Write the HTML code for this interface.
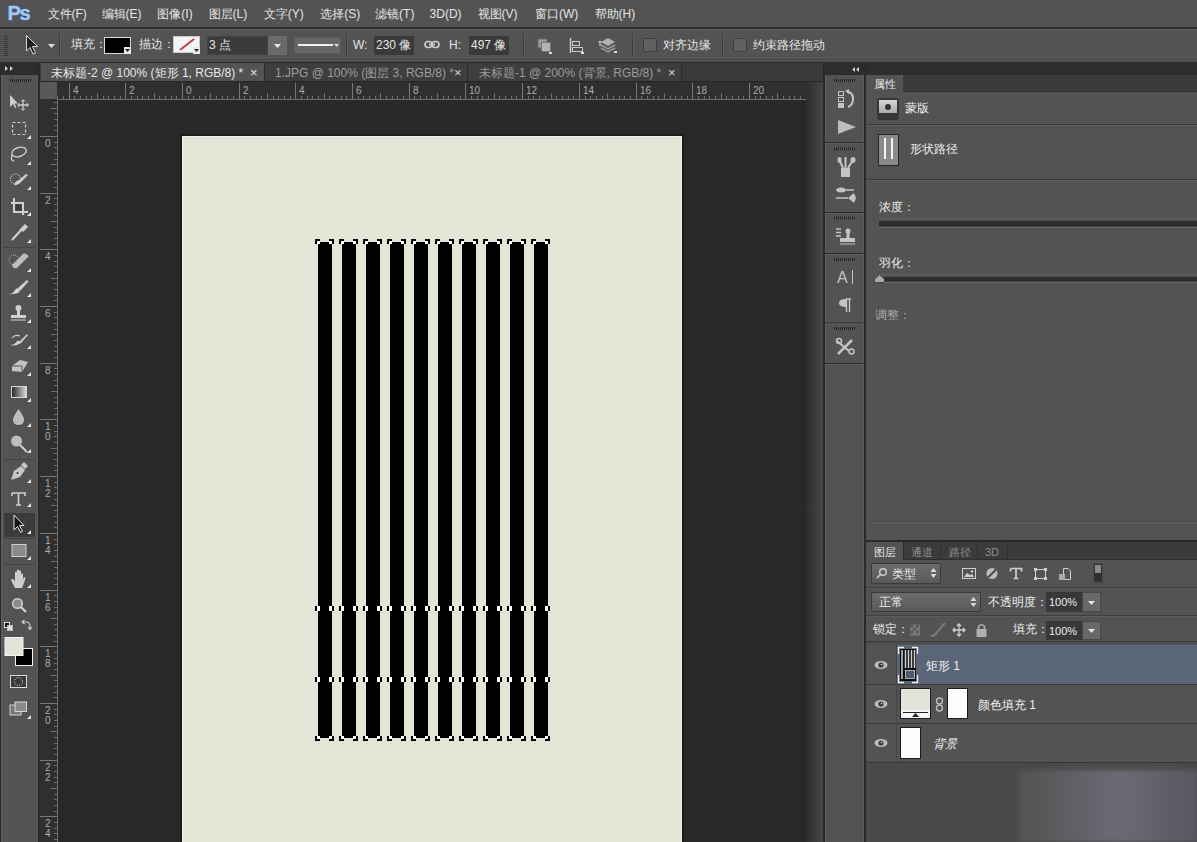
<!DOCTYPE html>
<html><head><meta charset="utf-8">
<style>
*{margin:0;padding:0;box-sizing:border-box}
html,body{width:1197px;height:842px;overflow:hidden}
body{position:relative;background:#535353;font-family:"Liberation Sans",sans-serif;color:#e4e4e4;font-size:12px}
.a{position:absolute}
.t{position:absolute;white-space:nowrap;line-height:1}
svg{position:absolute;overflow:visible}
</style></head><body>

<!-- MENU BAR -->
<div class="a" style="left:0;top:0;width:1197px;height:28px;background:#535353"></div>
<div class="a" style="left:0;top:27px;width:1197px;height:2px;background:#2c2c2c"></div>
<svg style="left:0;top:0" width="40" height="28"><g font-family="Liberation Sans" font-weight="700"><g fill="none" stroke="#2f507a" stroke-width="2.2"><text x="7.5" y="20" font-size="20">P</text><text x="19.5" y="20" font-size="20">s</text></g><g fill="#a9c6e8" stroke="#a9c6e8" stroke-width="0.5"><text x="7.5" y="20" font-size="20">P</text><text x="19.5" y="20" font-size="20">s</text></g></g></svg>
<div class="t" style="left:47.5px;top:8px">文件(F)</div><div class="t" style="left:101.6px;top:8px">编辑(E)</div><div class="t" style="left:157.3px;top:8px">图像(I)</div><div class="t" style="left:208.5px;top:8px">图层(L)</div><div class="t" style="left:263.8px;top:8px">文字(Y)</div><div class="t" style="left:320.2px;top:8px">选择(S)</div><div class="t" style="left:375.1px;top:8px">滤镜(T)</div><div class="t" style="left:429.6px;top:8px">3D(D)</div><div class="t" style="left:477.6px;top:8px">视图(V)</div><div class="t" style="left:535px;top:8px">窗口(W)</div><div class="t" style="left:594.6px;top:8px">帮助(H)</div>

<!-- OPTIONS BAR -->
<div class="a" style="left:0;top:29px;width:1197px;height:32px;background:#535353;border-top:1px solid #5f5f5f"></div>
<div class="a" style="left:0;top:57px;width:1197px;height:5px;background:#4f4f4f;border-top:1px solid #5a5a5a"></div>
<div class="a" style="left:0;top:62px;width:1197px;height:1px;background:#2a2a2a"></div>


<!-- options content -->
<div class="a" style="left:4px;top:35px;width:4px;height:21px;background:repeating-linear-gradient(180deg,#3a3a3a 0 1px,transparent 1px 2px)"></div>
<svg style="left:25px;top:34px" width="14" height="22" viewBox="0 0 14 22"><path d="M1.5 1.5 L1.5 17 L5 13.5 L8 20 L10.5 19 L7.5 12.5 L12.5 12.5 Z" fill="#1e1e1e" stroke="#d8d8d8" stroke-width="1"/></svg>
<svg style="left:48px;top:44px" width="7" height="4"><path d="M0 0 L7 0 L3.5 4 Z" fill="#e0e0e0"/></svg>
<div class="a" style="left:59px;top:34px;width:1px;height:23px;background:#3c3c3c"></div>
<div class="a" style="left:60px;top:34px;width:1px;height:23px;background:#5e5e5e"></div>
<div class="t" style="left:71px;top:38px">填充：</div>
<div class="a" style="left:104px;top:37px;width:27px;height:17px;background:#000;border:1px solid #dcdcdc"></div>
<div class="a" style="left:124px;top:47px;width:7px;height:7px;background:#e8e8e8"></div>
<svg style="left:125px;top:49px" width="5" height="3"><path d="M0 0 L5 0 L2.5 3 Z" fill="#222"/></svg>
<div class="t" style="left:139px;top:38px">描边：</div>
<div class="a" style="left:173px;top:36px;width:27px;height:17px;background:#f4f4f4;border:1px solid #c8c8c8"></div>
<svg style="left:173px;top:36px" width="27" height="17"><path d="M7 14 L21 3" stroke="#c0404a" stroke-width="2"/></svg>
<div class="a" style="left:193px;top:47px;width:7px;height:7px;background:#e8e8e8"></div>
<svg style="left:194px;top:49px" width="5" height="3"><path d="M0 0 L5 0 L2.5 3 Z" fill="#222"/></svg>
<div class="a" style="left:207px;top:36px;width:61px;height:19px;background:#3b3b3b;border:1px solid #444"></div>
<div class="t" style="left:209px;top:39px">3 点</div>
<div class="a" style="left:268px;top:36px;width:19px;height:19px;background:#6a6a6a"></div>
<svg style="left:274px;top:44px" width="7" height="4"><path d="M0 0 L7 0 L3.5 4 Z" fill="#e6e6e6"/></svg>
<div class="a" style="left:294px;top:37px;width:47px;height:17px;background:#676767;border-radius:2px;border:1px solid #5a5a5a"></div>
<div class="a" style="left:298px;top:44px;width:35px;height:2px;background:#f0f0f0"></div>
<svg style="left:334px;top:44px" width="5" height="3"><path d="M0 0 L5 0 L2.5 3 Z" fill="#e6e6e6"/></svg>
<div class="a" style="left:346px;top:34px;width:1px;height:23px;background:#3c3c3c"></div>
<div class="a" style="left:347px;top:34px;width:1px;height:23px;background:#5e5e5e"></div>
<div class="t" style="left:353px;top:39px">W:</div>
<div class="a" style="left:374px;top:36px;width:40px;height:19px;background:#3a3a3a"></div>
<div class="t" style="left:376px;top:39px">230 像</div>
<svg style="left:424px;top:40px" width="16" height="9" viewBox="0 0 16 9"><rect x="1" y="1.5" width="7" height="6" rx="3" fill="none" stroke="#cfcfcf" stroke-width="1.6"/><rect x="8" y="1.5" width="7" height="6" rx="3" fill="none" stroke="#cfcfcf" stroke-width="1.6"/><path d="M5 4.5 H11" stroke="#cfcfcf" stroke-width="1.6"/></svg>
<div class="t" style="left:449px;top:39px">H:</div>
<div class="a" style="left:469px;top:36px;width:40px;height:19px;background:#3a3a3a"></div>
<div class="t" style="left:471px;top:39px">497 像</div>
<div class="a" style="left:523px;top:34px;width:1px;height:23px;background:#3c3c3c"></div>
<div class="a" style="left:524px;top:34px;width:1px;height:23px;background:#5e5e5e"></div>
<svg style="left:537px;top:38px" width="16" height="16" viewBox="0 0 16 16"><rect x="1" y="1" width="9" height="9" fill="#9a9a9a" stroke="#6a6a6a"/><rect x="4.5" y="4.5" width="9" height="9" fill="#b4b4b4" stroke="#707070"/><rect x="12" y="14" width="3" height="2" fill="#ddd"/></svg>
<svg style="left:569px;top:38px" width="16" height="16" viewBox="0 0 16 16"><path d="M1.5 0 V15" stroke="#d0d0d0" stroke-width="1.4"/><rect x="3.5" y="3.5" width="7" height="4" fill="none" stroke="#c8c8c8"/><rect x="3.5" y="9.5" width="10" height="4" fill="none" stroke="#c8c8c8"/><rect x="12" y="14" width="3" height="2" fill="#ddd"/></svg>
<svg style="left:598px;top:36px" width="20" height="18" viewBox="0 0 20 18"><path d="M10 2 L17 6 L10 10 L3 6 Z" fill="#b0b0b0"/><path d="M3 9 L10 13 L17 9" fill="none" stroke="#999" stroke-width="1.5"/><path d="M3 12 L10 16 L17 12" fill="none" stroke="#999" stroke-width="1.5"/><path d="M2 5 V10 M0.5 6.5 L2 5 L3.5 6.5" stroke="#ddd" fill="none"/><rect x="16" y="15" width="3" height="2" fill="#ddd"/></svg>
<div class="a" style="left:632px;top:34px;width:1px;height:23px;background:#3c3c3c"></div>
<div class="a" style="left:633px;top:34px;width:1px;height:23px;background:#5e5e5e"></div>
<div class="a" style="left:643px;top:38px;width:14px;height:14px;background:#606060;border:1px solid #3e3e3e;border-radius:2px"></div>
<div class="t" style="left:663px;top:39px">对齐边缘</div>
<div class="a" style="left:722px;top:34px;width:1px;height:23px;background:#3c3c3c"></div>
<div class="a" style="left:723px;top:34px;width:1px;height:23px;background:#5e5e5e"></div>
<div class="a" style="left:733px;top:38px;width:14px;height:14px;background:#606060;border:1px solid #3e3e3e;border-radius:2px"></div>
<div class="t" style="left:753px;top:39px">约束路径拖动</div>

<!-- TAB BAR ROW -->
<div class="a" style="left:0;top:63px;width:824px;height:19px;background:#3a3a3a"></div>
<div class="a" style="left:0;top:63px;width:38px;height:12px;background:#2d2d2d"></div>
<svg style="left:5px;top:66px" width="9" height="5"><path d="M0 0 L3 2.5 L0 5Z M5 0 L8 2.5 L5 5Z" fill="#cfcfcf"/></svg>
<div class="a" style="left:38px;top:63px;width:2px;height:779px;background:#2a2a2a"></div>
<div class="a" style="left:41px;top:63px;width:223px;height:18px;background:#535353"></div>
<div class="t" style="left:51px;top:67px;color:#e8e8e8">未标题-2 @ 100% (矩形 1, RGB/8) *</div>
<div class="t" style="left:250px;top:66px;color:#e8e8e8;font-size:13px">×</div>
<div class="a" style="left:264px;top:63px;width:1px;height:18px;background:#2c2c2c"></div>
<div class="a" style="left:265px;top:63px;width:202px;height:18px;background:#3e3e3e"></div>
<div class="t" style="left:275px;top:67px;color:#9c9c9c">1.JPG @ 100% (图层 3, RGB/8) *</div>
<div class="t" style="left:454px;top:66px;color:#d8d8d8;font-size:13px">×</div>
<div class="a" style="left:467px;top:63px;width:1px;height:18px;background:#2c2c2c"></div>
<div class="a" style="left:468px;top:63px;width:213px;height:18px;background:#3e3e3e"></div>
<div class="t" style="left:479px;top:67px;color:#9c9c9c">未标题-1 @ 200% (背景, RGB/8) *</div>
<div class="t" style="left:668px;top:66px;color:#d8d8d8;font-size:13px">×</div>
<div class="a" style="left:681px;top:63px;width:1px;height:18px;background:#2c2c2c"></div>
<div class="a" style="left:40px;top:81px;width:784px;height:1px;background:#262626"></div>

<!-- TOOLBAR -->
<div class="a" style="left:0;top:75px;width:38px;height:767px;background:#535353;border-left:1px solid #262626;border-right:1px solid #5c5c5c"></div>
<div class="a" style="left:1px;top:75px;width:2px;height:767px;background:#5c5c5c"></div>

<svg style="left:0;top:0" width="38" height="842" viewBox="0 0 38 842">
<!-- grip -->
<defs><pattern id="grip2" width="2" height="3" patternUnits="userSpaceOnUse"><rect width="1" height="3" fill="#262626"/></pattern></defs><rect x="10" y="79" width="21" height="3" fill="url(#grip2)"/>
<path d="M6.5 76 V842" stroke="#575757"/>
<!-- move -->
<path d="M10 95 L10 107 L13 104 L15 108 L16.5 107.5 L14.5 103.5 L18 103.5 Z" fill="#cfcfcf"/>
<path d="M23 100 V110 M18 105 H28" stroke="#cfcfcf" stroke-width="1.3"/>
<path d="M21 101.5 L23 99.5 L25 101.5 M21 108.5 L23 110.5 L25 108.5 M19.5 103 L17.5 105 L19.5 107 M26.5 103 L28.5 105 L26.5 107" stroke="#cfcfcf" fill="none"/>
<!-- marquee -->
<rect x="12.5" y="122.5" width="13" height="12" fill="none" stroke="#cfcfcf" stroke-width="1.2" stroke-dasharray="3 2"/>
<path d="M27 139 L31 135 L31 139 Z" fill="#e6e6e6"/>
<!-- lasso -->
<ellipse cx="19" cy="152" rx="7.5" ry="4.5" transform="rotate(-18 19 152)" fill="none" stroke="#cfcfcf" stroke-width="1.4"/>
<path d="M12 155 Q10 160 14 161" fill="none" stroke="#cfcfcf" stroke-width="1.3"/>
<path d="M27 165 L31 161 L31 165 Z" fill="#e6e6e6"/>
<!-- quick select -->
<circle cx="15.5" cy="179" r="5" fill="none" stroke="#cfcfcf" stroke-width="1.1" stroke-dasharray="1 1.2"/>
<path d="M14 185 Q18 186 21 182 L28 175 L26 174 L19 180 Q15 181 14 185Z" fill="#cfcfcf"/>
<path d="M27 190 L31 186 L31 190 Z" fill="#e6e6e6"/>
<!-- crop -->
<path d="M14 198 V212 H28 M11 203 H23 V215" fill="none" stroke="#cfcfcf" stroke-width="2"/>
<rect x="15.5" y="204.5" width="6" height="6" fill="#3a3a3a"/>
<path d="M27 216 L31 212 L31 216 Z" fill="#e6e6e6"/>
<!-- eyedropper -->
<path d="M12 240 L22 229" stroke="#cfcfcf" stroke-width="2.2"/>
<path d="M20 229 L25 224 L28 227 L23 232 Z" fill="#cfcfcf"/>
<path d="M27 243 L31 239 L31 243 Z" fill="#e6e6e6"/>
<path d="M3 247.5 H35" stroke="#444"/>
<!-- healing -->
<path d="M12 265 L23.5 253.5 Q27 253 28.5 256.5 L17 268 Q13 269 12 265Z" fill="#bdbdbd"/>
<circle cx="14" cy="260" r="5" fill="none" stroke="#cfcfcf" stroke-width="1" stroke-dasharray="1 1.2"/>
<path d="M27 272 L31 268 L31 272 Z" fill="#e6e6e6"/>
<!-- brush -->
<path d="M18 288 L27 280 L28.5 281.5 L20.5 290.5Z" fill="#cfcfcf"/>
<path d="M8 294 Q13 294.5 15 290 Q17 287 20 289.5 Q20 295 8 294Z" fill="#d4d4d4"/>
<path d="M27 297 L31 293 L31 297 Z" fill="#e6e6e6"/>
<!-- stamp -->
<circle cx="18.5" cy="308" r="3" fill="#cfcfcf"/>
<rect x="17" y="310" width="3" height="5" fill="#cfcfcf"/>
<rect x="11" y="315" width="15" height="3" fill="#cfcfcf"/>
<path d="M11 320 H26" stroke="#cfcfcf"/>
<path d="M27 323 L31 319 L31 323 Z" fill="#e6e6e6"/>
<!-- history brush -->
<path d="M18 343 L27 334 L28 335 L20 344Z" fill="#cfcfcf"/>
<path d="M10 345 Q15 345 17 341 Q19 340 20 342 Q18 347 10 345Z" fill="#cfcfcf"/>
<path d="M12 338 Q15 334 20 336" fill="none" stroke="#cfcfcf" stroke-width="1.2"/>
<path d="M27 349 L31 345 L31 349 Z" fill="#e6e6e6"/>
<!-- eraser -->
<path d="M12 366 L20 360 L28 362 L22 372 L12 371Z" fill="#c4c4c4"/>
<path d="M12 366 L22 366 L22 372" fill="none" stroke="#555" stroke-width="1"/>
<path d="M27 376 L31 372 L31 376 Z" fill="#e6e6e6"/>
<!-- gradient -->
<rect x="11.5" y="386.5" width="15" height="11" fill="url(#gr)" stroke="#d8d8d8"/>
<path d="M27 402 L31 398 L31 402 Z" fill="#e6e6e6"/>
<!-- blur drop -->
<path d="M18.5 409 Q12 418 13 421 Q14 425 18.5 425 Q23 425 24 421 Q25 418 18.5 409Z" fill="#bdbdbd"/>
<path d="M27 427 L31 423 L31 427 Z" fill="#e6e6e6"/>
<!-- dodge -->
<circle cx="16.5" cy="441" r="5.5" fill="#bdbdbd"/>
<path d="M20 445 L27 452" stroke="#cfcfcf" stroke-width="2"/>
<path d="M27 453 L31 449 L31 453 Z" fill="#e6e6e6"/>
<path d="M3 459.5 H35" stroke="#444"/>
<!-- pen -->
<path d="M11 480 L14 471 L21 466 L25 470 L20 477 Z" fill="#c8c8c8"/>
<path d="M21 465 L24 462 L28 466 L25 469Z" fill="#c8c8c8"/>
<circle cx="17.5" cy="473" r="1" fill="#333"/>
<path d="M27 483 L31 479 L31 483 Z" fill="#e6e6e6"/>
<!-- type -->
<path d="M12 493 H25 V496 M12 493 V496 M18.5 493 V505 M16 505 H21" fill="none" stroke="#cfcfcf" stroke-width="1.6"/>
<path d="M27 507 L31 503 L31 507 Z" fill="#e6e6e6"/>
<!-- selected path select -->
<rect x="4" y="513" width="31" height="24" fill="#3b3b3b"/>
<path d="M14 515 L14 530 L17.5 526.5 L20.5 532.5 L22.5 531.5 L19.5 525.5 L24 525.5 Z" fill="#111" stroke="#e8e8e8" stroke-width="1"/>
<path d="M27 534 L31 530 L31 534 Z" fill="#e6e6e6"/>
<path d="M3 538.5 H35" stroke="#444"/>
<!-- rectangle -->
<rect x="12" y="544.5" width="14" height="12" fill="#8a8a8a" stroke="#d0d0d0"/>
<path d="M27 560 L31 556 L31 560 Z" fill="#e6e6e6"/>
<path d="M3 564.5 H35" stroke="#444"/>
<!-- hand -->
<path d="M15 588 L11 580 Q12 578 14 580 L15 581 V572 Q16 571 17 572 V578 V570 Q18 569 19 570 V578 V571 Q20 570 21 571 V578 V574 Q22 573 23 574 V580 L24 577 Q26 577 25 580 L22 588Z" fill="#cdcdcd"/>
<path d="M27 588 L31 584 L31 588 Z" fill="#e6e6e6"/>
<!-- zoom -->
<circle cx="17.5" cy="603.5" r="4.8" fill="#8a8a8a" stroke="#d0d0d0" stroke-width="1.5"/>
<path d="M21 607 L26 612" stroke="#d0d0d0" stroke-width="2.2"/>
<!-- default colors -->
<rect x="4.5" y="622.5" width="5" height="5" fill="#111" stroke="#ddd"/>
<rect x="7.5" y="625.5" width="5" height="5" fill="#ddd" stroke="#bbb"/>
<path d="M23 622 L26 622 Q30 622 30 626 L30 629 M28 627 L30 629.5 L32 627 M24.5 620 L22 622 L24.5 624" fill="none" stroke="#d0d0d0" stroke-width="1.1"/>
<!-- fg/bg -->
<rect x="15.5" y="648.5" width="17" height="17" fill="#000" stroke="#f0f0f0"/>
<rect x="5" y="637.5" width="18" height="18" fill="#e2e3d9" stroke="#f4f4f4"/>
<!-- quick mask -->
<rect x="10.5" y="675.5" width="16" height="12" fill="#3a3a3a" stroke="#d8d8d8"/>
<circle cx="18.5" cy="681.5" r="4" fill="none" stroke="#e0e0e0" stroke-width="1" stroke-dasharray="1 1.3"/>
<!-- screen mode -->
<rect x="10" y="705" width="11" height="10" fill="#777" stroke="#d0d0d0"/>
<rect x="15" y="702" width="11.5" height="9.5" fill="#8a8a8a" stroke="#d8d8d8"/>
<path d="M27 719 L31 715 L31 719 Z" fill="#e6e6e6"/>
<defs><linearGradient id="gr" x1="0" x2="1"><stop offset="0" stop-color="#222"/><stop offset="1" stop-color="#ddd"/></linearGradient></defs>
</svg>
<!-- RULERS -->
<div class="a" style="left:40px;top:82px;width:17px;height:17px;background:#595959"></div>
<div class="a" style="left:57px;top:82px;width:750px;height:17px;background:#2f2f2f"></div>
<div class="a" style="left:40px;top:99px;width:17px;height:743px;background:#2f2f2f"></div>

<svg style="left:57px;top:83px;overflow:hidden" width="750" height="17"><path d="M0.5 13 V16" stroke="#6e6e6e"/><path d="M6.5 13 V16" stroke="#6e6e6e"/><path d="M12.5 0 V16" stroke="#777"/><text x="16.0" y="10.5" fill="#acacac" font-size="10" font-family="Liberation Sans">4</text><path d="M17.5 13 V16" stroke="#6e6e6e"/><path d="M23.5 13 V16" stroke="#6e6e6e"/><path d="M29.5 13 V16" stroke="#6e6e6e"/><path d="M34.5 13 V16" stroke="#6e6e6e"/><path d="M40.5 10 V16" stroke="#6e6e6e"/><path d="M46.5 13 V16" stroke="#6e6e6e"/><path d="M51.5 13 V16" stroke="#6e6e6e"/><path d="M57.5 13 V16" stroke="#6e6e6e"/><path d="M63.5 13 V16" stroke="#6e6e6e"/><path d="M68.5 0 V16" stroke="#777"/><text x="72.0" y="10.5" fill="#acacac" font-size="10" font-family="Liberation Sans">2</text><path d="M74.5 13 V16" stroke="#6e6e6e"/><path d="M80.5 13 V16" stroke="#6e6e6e"/><path d="M85.5 13 V16" stroke="#6e6e6e"/><path d="M91.5 13 V16" stroke="#6e6e6e"/><path d="M97.5 10 V16" stroke="#6e6e6e"/><path d="M102.5 13 V16" stroke="#6e6e6e"/><path d="M108.5 13 V16" stroke="#6e6e6e"/><path d="M114.5 13 V16" stroke="#6e6e6e"/><path d="M119.5 13 V16" stroke="#6e6e6e"/><path d="M125.5 0 V16" stroke="#777"/><text x="129.0" y="10.5" fill="#acacac" font-size="10" font-family="Liberation Sans">0</text><path d="M131.5 13 V16" stroke="#6e6e6e"/><path d="M136.5 13 V16" stroke="#6e6e6e"/><path d="M142.5 13 V16" stroke="#6e6e6e"/><path d="M148.5 13 V16" stroke="#6e6e6e"/><path d="M153.5 10 V16" stroke="#6e6e6e"/><path d="M159.5 13 V16" stroke="#6e6e6e"/><path d="M165.5 13 V16" stroke="#6e6e6e"/><path d="M170.5 13 V16" stroke="#6e6e6e"/><path d="M176.5 13 V16" stroke="#6e6e6e"/><path d="M182.5 0 V16" stroke="#777"/><text x="186.0" y="10.5" fill="#acacac" font-size="10" font-family="Liberation Sans">2</text><path d="M187.5 13 V16" stroke="#6e6e6e"/><path d="M193.5 13 V16" stroke="#6e6e6e"/><path d="M199.5 13 V16" stroke="#6e6e6e"/><path d="M204.5 13 V16" stroke="#6e6e6e"/><path d="M210.5 10 V16" stroke="#6e6e6e"/><path d="M216.5 13 V16" stroke="#6e6e6e"/><path d="M221.5 13 V16" stroke="#6e6e6e"/><path d="M227.5 13 V16" stroke="#6e6e6e"/><path d="M233.5 13 V16" stroke="#6e6e6e"/><path d="M238.5 0 V16" stroke="#777"/><text x="242.0" y="10.5" fill="#acacac" font-size="10" font-family="Liberation Sans">4</text><path d="M244.5 13 V16" stroke="#6e6e6e"/><path d="M250.5 13 V16" stroke="#6e6e6e"/><path d="M255.5 13 V16" stroke="#6e6e6e"/><path d="M261.5 13 V16" stroke="#6e6e6e"/><path d="M267.5 10 V16" stroke="#6e6e6e"/><path d="M272.5 13 V16" stroke="#6e6e6e"/><path d="M278.5 13 V16" stroke="#6e6e6e"/><path d="M284.5 13 V16" stroke="#6e6e6e"/><path d="M289.5 13 V16" stroke="#6e6e6e"/><path d="M295.5 0 V16" stroke="#777"/><text x="299.0" y="10.5" fill="#acacac" font-size="10" font-family="Liberation Sans">6</text><path d="M301.5 13 V16" stroke="#6e6e6e"/><path d="M306.5 13 V16" stroke="#6e6e6e"/><path d="M312.5 13 V16" stroke="#6e6e6e"/><path d="M318.5 13 V16" stroke="#6e6e6e"/><path d="M323.5 10 V16" stroke="#6e6e6e"/><path d="M329.5 13 V16" stroke="#6e6e6e"/><path d="M335.5 13 V16" stroke="#6e6e6e"/><path d="M340.5 13 V16" stroke="#6e6e6e"/><path d="M346.5 13 V16" stroke="#6e6e6e"/><path d="M352.5 0 V16" stroke="#777"/><text x="356.0" y="10.5" fill="#acacac" font-size="10" font-family="Liberation Sans">8</text><path d="M357.5 13 V16" stroke="#6e6e6e"/><path d="M363.5 13 V16" stroke="#6e6e6e"/><path d="M369.5 13 V16" stroke="#6e6e6e"/><path d="M374.5 13 V16" stroke="#6e6e6e"/><path d="M380.5 10 V16" stroke="#6e6e6e"/><path d="M386.5 13 V16" stroke="#6e6e6e"/><path d="M391.5 13 V16" stroke="#6e6e6e"/><path d="M397.5 13 V16" stroke="#6e6e6e"/><path d="M403.5 13 V16" stroke="#6e6e6e"/><path d="M408.5 0 V16" stroke="#777"/><text x="412.0" y="10.5" fill="#acacac" font-size="10" font-family="Liberation Sans">10</text><path d="M414.5 13 V16" stroke="#6e6e6e"/><path d="M420.5 13 V16" stroke="#6e6e6e"/><path d="M425.5 13 V16" stroke="#6e6e6e"/><path d="M431.5 13 V16" stroke="#6e6e6e"/><path d="M437.5 10 V16" stroke="#6e6e6e"/><path d="M442.5 13 V16" stroke="#6e6e6e"/><path d="M448.5 13 V16" stroke="#6e6e6e"/><path d="M454.5 13 V16" stroke="#6e6e6e"/><path d="M459.5 13 V16" stroke="#6e6e6e"/><path d="M465.5 0 V16" stroke="#777"/><text x="469.0" y="10.5" fill="#acacac" font-size="10" font-family="Liberation Sans">12</text><path d="M471.5 13 V16" stroke="#6e6e6e"/><path d="M476.5 13 V16" stroke="#6e6e6e"/><path d="M482.5 13 V16" stroke="#6e6e6e"/><path d="M488.5 13 V16" stroke="#6e6e6e"/><path d="M494.5 10 V16" stroke="#6e6e6e"/><path d="M499.5 13 V16" stroke="#6e6e6e"/><path d="M505.5 13 V16" stroke="#6e6e6e"/><path d="M511.5 13 V16" stroke="#6e6e6e"/><path d="M516.5 13 V16" stroke="#6e6e6e"/><path d="M522.5 0 V16" stroke="#777"/><text x="526.0" y="10.5" fill="#acacac" font-size="10" font-family="Liberation Sans">14</text><path d="M528.5 13 V16" stroke="#6e6e6e"/><path d="M533.5 13 V16" stroke="#6e6e6e"/><path d="M539.5 13 V16" stroke="#6e6e6e"/><path d="M545.5 13 V16" stroke="#6e6e6e"/><path d="M550.5 10 V16" stroke="#6e6e6e"/><path d="M556.5 13 V16" stroke="#6e6e6e"/><path d="M562.5 13 V16" stroke="#6e6e6e"/><path d="M567.5 13 V16" stroke="#6e6e6e"/><path d="M573.5 13 V16" stroke="#6e6e6e"/><path d="M579.5 0 V16" stroke="#777"/><text x="583.0" y="10.5" fill="#acacac" font-size="10" font-family="Liberation Sans">16</text><path d="M584.5 13 V16" stroke="#6e6e6e"/><path d="M590.5 13 V16" stroke="#6e6e6e"/><path d="M596.5 13 V16" stroke="#6e6e6e"/><path d="M601.5 13 V16" stroke="#6e6e6e"/><path d="M607.5 10 V16" stroke="#6e6e6e"/><path d="M613.5 13 V16" stroke="#6e6e6e"/><path d="M618.5 13 V16" stroke="#6e6e6e"/><path d="M624.5 13 V16" stroke="#6e6e6e"/><path d="M630.5 13 V16" stroke="#6e6e6e"/><path d="M635.5 0 V16" stroke="#777"/><text x="639.0" y="10.5" fill="#acacac" font-size="10" font-family="Liberation Sans">18</text><path d="M641.5 13 V16" stroke="#6e6e6e"/><path d="M647.5 13 V16" stroke="#6e6e6e"/><path d="M652.5 13 V16" stroke="#6e6e6e"/><path d="M658.5 13 V16" stroke="#6e6e6e"/><path d="M664.5 10 V16" stroke="#6e6e6e"/><path d="M669.5 13 V16" stroke="#6e6e6e"/><path d="M675.5 13 V16" stroke="#6e6e6e"/><path d="M681.5 13 V16" stroke="#6e6e6e"/><path d="M686.5 13 V16" stroke="#6e6e6e"/><path d="M692.5 0 V16" stroke="#777"/><text x="696.0" y="10.5" fill="#acacac" font-size="10" font-family="Liberation Sans">20</text><path d="M698.5 13 V16" stroke="#6e6e6e"/><path d="M703.5 13 V16" stroke="#6e6e6e"/><path d="M709.5 13 V16" stroke="#6e6e6e"/><path d="M715.5 13 V16" stroke="#6e6e6e"/><path d="M720.5 10 V16" stroke="#6e6e6e"/><path d="M726.5 13 V16" stroke="#6e6e6e"/><path d="M732.5 13 V16" stroke="#6e6e6e"/><path d="M737.5 13 V16" stroke="#6e6e6e"/><path d="M743.5 13 V16" stroke="#6e6e6e"/><path d="M749.5 0 V16" stroke="#777"/><text x="753.0" y="10.5" fill="#acacac" font-size="10" font-family="Liberation Sans">22</text><path d="M0 16.5 H750" stroke="#6e6e6e"/></svg>
<svg style="left:40px;top:99px;overflow:hidden" width="18" height="743"><path d="M14 3.5 H17" stroke="#6e6e6e"/><path d="M11 9.5 H17" stroke="#6e6e6e"/><path d="M14 14.5 H17" stroke="#6e6e6e"/><path d="M14 20.5 H17" stroke="#6e6e6e"/><path d="M14 26.5 H17" stroke="#6e6e6e"/><path d="M14 31.5 H17" stroke="#6e6e6e"/><path d="M0 37.5 H17" stroke="#777"/><text x="5" y="48.0" fill="#acacac" font-size="10" font-family="Liberation Sans">0</text><path d="M14 43.5 H17" stroke="#6e6e6e"/><path d="M14 48.5 H17" stroke="#6e6e6e"/><path d="M14 54.5 H17" stroke="#6e6e6e"/><path d="M14 60.5 H17" stroke="#6e6e6e"/><path d="M11 65.5 H17" stroke="#6e6e6e"/><path d="M14 71.5 H17" stroke="#6e6e6e"/><path d="M14 77.5 H17" stroke="#6e6e6e"/><path d="M14 82.5 H17" stroke="#6e6e6e"/><path d="M14 88.5 H17" stroke="#6e6e6e"/><path d="M0 94.5 H17" stroke="#777"/><text x="5" y="105.0" fill="#acacac" font-size="10" font-family="Liberation Sans">2</text><path d="M14 99.5 H17" stroke="#6e6e6e"/><path d="M14 105.5 H17" stroke="#6e6e6e"/><path d="M14 111.5 H17" stroke="#6e6e6e"/><path d="M14 116.5 H17" stroke="#6e6e6e"/><path d="M11 122.5 H17" stroke="#6e6e6e"/><path d="M14 128.5 H17" stroke="#6e6e6e"/><path d="M14 133.5 H17" stroke="#6e6e6e"/><path d="M14 139.5 H17" stroke="#6e6e6e"/><path d="M14 145.5 H17" stroke="#6e6e6e"/><path d="M0 150.5 H17" stroke="#777"/><text x="5" y="161.0" fill="#acacac" font-size="10" font-family="Liberation Sans">4</text><path d="M14 156.5 H17" stroke="#6e6e6e"/><path d="M14 162.5 H17" stroke="#6e6e6e"/><path d="M14 167.5 H17" stroke="#6e6e6e"/><path d="M14 173.5 H17" stroke="#6e6e6e"/><path d="M11 179.5 H17" stroke="#6e6e6e"/><path d="M14 184.5 H17" stroke="#6e6e6e"/><path d="M14 190.5 H17" stroke="#6e6e6e"/><path d="M14 196.5 H17" stroke="#6e6e6e"/><path d="M14 201.5 H17" stroke="#6e6e6e"/><path d="M0 207.5 H17" stroke="#777"/><text x="5" y="218.0" fill="#acacac" font-size="10" font-family="Liberation Sans">6</text><path d="M14 213.5 H17" stroke="#6e6e6e"/><path d="M14 218.5 H17" stroke="#6e6e6e"/><path d="M14 224.5 H17" stroke="#6e6e6e"/><path d="M14 230.5 H17" stroke="#6e6e6e"/><path d="M11 235.5 H17" stroke="#6e6e6e"/><path d="M14 241.5 H17" stroke="#6e6e6e"/><path d="M14 247.5 H17" stroke="#6e6e6e"/><path d="M14 252.5 H17" stroke="#6e6e6e"/><path d="M14 258.5 H17" stroke="#6e6e6e"/><path d="M0 264.5 H17" stroke="#777"/><text x="5" y="275.0" fill="#acacac" font-size="10" font-family="Liberation Sans">8</text><path d="M14 269.5 H17" stroke="#6e6e6e"/><path d="M14 275.5 H17" stroke="#6e6e6e"/><path d="M14 281.5 H17" stroke="#6e6e6e"/><path d="M14 286.5 H17" stroke="#6e6e6e"/><path d="M11 292.5 H17" stroke="#6e6e6e"/><path d="M14 298.5 H17" stroke="#6e6e6e"/><path d="M14 303.5 H17" stroke="#6e6e6e"/><path d="M14 309.5 H17" stroke="#6e6e6e"/><path d="M14 315.5 H17" stroke="#6e6e6e"/><path d="M0 320.5 H17" stroke="#777"/><text x="5" y="331.0" fill="#acacac" font-size="10" font-family="Liberation Sans">1</text><text x="5" y="341.0" fill="#acacac" font-size="10" font-family="Liberation Sans">0</text><path d="M14 326.5 H17" stroke="#6e6e6e"/><path d="M14 332.5 H17" stroke="#6e6e6e"/><path d="M14 337.5 H17" stroke="#6e6e6e"/><path d="M14 343.5 H17" stroke="#6e6e6e"/><path d="M11 349.5 H17" stroke="#6e6e6e"/><path d="M14 354.5 H17" stroke="#6e6e6e"/><path d="M14 360.5 H17" stroke="#6e6e6e"/><path d="M14 366.5 H17" stroke="#6e6e6e"/><path d="M14 371.5 H17" stroke="#6e6e6e"/><path d="M0 377.5 H17" stroke="#777"/><text x="5" y="388.0" fill="#acacac" font-size="10" font-family="Liberation Sans">1</text><text x="5" y="398.0" fill="#acacac" font-size="10" font-family="Liberation Sans">2</text><path d="M14 383.5 H17" stroke="#6e6e6e"/><path d="M14 388.5 H17" stroke="#6e6e6e"/><path d="M14 394.5 H17" stroke="#6e6e6e"/><path d="M14 400.5 H17" stroke="#6e6e6e"/><path d="M11 406.5 H17" stroke="#6e6e6e"/><path d="M14 411.5 H17" stroke="#6e6e6e"/><path d="M14 417.5 H17" stroke="#6e6e6e"/><path d="M14 423.5 H17" stroke="#6e6e6e"/><path d="M14 428.5 H17" stroke="#6e6e6e"/><path d="M0 434.5 H17" stroke="#777"/><text x="5" y="445.0" fill="#acacac" font-size="10" font-family="Liberation Sans">1</text><text x="5" y="455.0" fill="#acacac" font-size="10" font-family="Liberation Sans">4</text><path d="M14 440.5 H17" stroke="#6e6e6e"/><path d="M14 445.5 H17" stroke="#6e6e6e"/><path d="M14 451.5 H17" stroke="#6e6e6e"/><path d="M14 457.5 H17" stroke="#6e6e6e"/><path d="M11 462.5 H17" stroke="#6e6e6e"/><path d="M14 468.5 H17" stroke="#6e6e6e"/><path d="M14 474.5 H17" stroke="#6e6e6e"/><path d="M14 479.5 H17" stroke="#6e6e6e"/><path d="M14 485.5 H17" stroke="#6e6e6e"/><path d="M0 491.5 H17" stroke="#777"/><text x="5" y="502.0" fill="#acacac" font-size="10" font-family="Liberation Sans">1</text><text x="5" y="512.0" fill="#acacac" font-size="10" font-family="Liberation Sans">6</text><path d="M14 496.5 H17" stroke="#6e6e6e"/><path d="M14 502.5 H17" stroke="#6e6e6e"/><path d="M14 508.5 H17" stroke="#6e6e6e"/><path d="M14 513.5 H17" stroke="#6e6e6e"/><path d="M11 519.5 H17" stroke="#6e6e6e"/><path d="M14 525.5 H17" stroke="#6e6e6e"/><path d="M14 530.5 H17" stroke="#6e6e6e"/><path d="M14 536.5 H17" stroke="#6e6e6e"/><path d="M14 542.5 H17" stroke="#6e6e6e"/><path d="M0 547.5 H17" stroke="#777"/><text x="5" y="558.0" fill="#acacac" font-size="10" font-family="Liberation Sans">1</text><text x="5" y="568.0" fill="#acacac" font-size="10" font-family="Liberation Sans">8</text><path d="M14 553.5 H17" stroke="#6e6e6e"/><path d="M14 559.5 H17" stroke="#6e6e6e"/><path d="M14 564.5 H17" stroke="#6e6e6e"/><path d="M14 570.5 H17" stroke="#6e6e6e"/><path d="M11 576.5 H17" stroke="#6e6e6e"/><path d="M14 581.5 H17" stroke="#6e6e6e"/><path d="M14 587.5 H17" stroke="#6e6e6e"/><path d="M14 593.5 H17" stroke="#6e6e6e"/><path d="M14 598.5 H17" stroke="#6e6e6e"/><path d="M0 604.5 H17" stroke="#777"/><text x="5" y="615.0" fill="#acacac" font-size="10" font-family="Liberation Sans">2</text><text x="5" y="625.0" fill="#acacac" font-size="10" font-family="Liberation Sans">0</text><path d="M14 610.5 H17" stroke="#6e6e6e"/><path d="M14 615.5 H17" stroke="#6e6e6e"/><path d="M14 621.5 H17" stroke="#6e6e6e"/><path d="M14 627.5 H17" stroke="#6e6e6e"/><path d="M11 632.5 H17" stroke="#6e6e6e"/><path d="M14 638.5 H17" stroke="#6e6e6e"/><path d="M14 644.5 H17" stroke="#6e6e6e"/><path d="M14 649.5 H17" stroke="#6e6e6e"/><path d="M14 655.5 H17" stroke="#6e6e6e"/><path d="M0 661.5 H17" stroke="#777"/><text x="5" y="672.0" fill="#acacac" font-size="10" font-family="Liberation Sans">2</text><text x="5" y="682.0" fill="#acacac" font-size="10" font-family="Liberation Sans">2</text><path d="M14 666.5 H17" stroke="#6e6e6e"/><path d="M14 672.5 H17" stroke="#6e6e6e"/><path d="M14 678.5 H17" stroke="#6e6e6e"/><path d="M14 683.5 H17" stroke="#6e6e6e"/><path d="M11 689.5 H17" stroke="#6e6e6e"/><path d="M14 695.5 H17" stroke="#6e6e6e"/><path d="M14 700.5 H17" stroke="#6e6e6e"/><path d="M14 706.5 H17" stroke="#6e6e6e"/><path d="M14 712.5 H17" stroke="#6e6e6e"/><path d="M0 717.5 H17" stroke="#777"/><text x="5" y="728.0" fill="#acacac" font-size="10" font-family="Liberation Sans">2</text><text x="5" y="738.0" fill="#acacac" font-size="10" font-family="Liberation Sans">4</text><path d="M14 723.5 H17" stroke="#6e6e6e"/><path d="M14 729.5 H17" stroke="#6e6e6e"/><path d="M14 734.5 H17" stroke="#6e6e6e"/><path d="M14 740.5 H17" stroke="#6e6e6e"/><path d="M17.5 0 V743" stroke="#6e6e6e"/></svg>
<!-- CANVAS -->
<div class="a" style="left:58px;top:100px;width:748px;height:742px;background:#282828"></div>
<div class="a" style="left:180px;top:134px;width:504px;height:708px;background:#1c1c19"></div>
<div class="a" style="left:182px;top:136px;width:500px;height:706px;background:#e3e5d7;border-left:1px solid #f2f2ec;border-top:1px solid #f2f2ec;border-right:1px solid #f0f0ea"></div>

<!-- BARS -->
<div class="a" style="left:318px;top:242px;width:14px;height:496px;background:#000"></div>
<div class="a" style="left:342px;top:242px;width:14px;height:496px;background:#000"></div>
<div class="a" style="left:366px;top:242px;width:14px;height:496px;background:#000"></div>
<div class="a" style="left:390px;top:242px;width:14px;height:496px;background:#000"></div>
<div class="a" style="left:414px;top:242px;width:14px;height:496px;background:#000"></div>
<div class="a" style="left:438px;top:242px;width:14px;height:496px;background:#000"></div>
<div class="a" style="left:462px;top:242px;width:14px;height:496px;background:#000"></div>
<div class="a" style="left:486px;top:242px;width:14px;height:496px;background:#000"></div>
<div class="a" style="left:510px;top:242px;width:14px;height:496px;background:#000"></div>
<div class="a" style="left:534px;top:242px;width:14px;height:496px;background:#000"></div>
<div class="a" style="left:315px;top:239px;width:5px;height:5px;background:#000"><div class="a" style="left:2px;top:2px;width:3px;height:3px;background:#fff"></div></div>
<div class="a" style="left:315px;top:606px;width:5px;height:5px;background:#000"><div class="a" style="left:2px;top:0px;width:3px;height:5px;background:#fff"></div></div>
<div class="a" style="left:315px;top:677px;width:5px;height:5px;background:#000"><div class="a" style="left:2px;top:0px;width:3px;height:5px;background:#fff"></div></div>
<div class="a" style="left:315px;top:736px;width:5px;height:5px;background:#000"><div class="a" style="left:2px;top:0px;width:3px;height:3px;background:#fff"></div></div>
<div class="a" style="left:329px;top:239px;width:5px;height:5px;background:#000"><div class="a" style="left:0px;top:2px;width:3px;height:3px;background:#fff"></div></div>
<div class="a" style="left:329px;top:606px;width:5px;height:5px;background:#000"><div class="a" style="left:0px;top:0px;width:3px;height:5px;background:#fff"></div></div>
<div class="a" style="left:329px;top:677px;width:5px;height:5px;background:#000"><div class="a" style="left:0px;top:0px;width:3px;height:5px;background:#fff"></div></div>
<div class="a" style="left:329px;top:736px;width:5px;height:5px;background:#000"><div class="a" style="left:0px;top:0px;width:3px;height:3px;background:#fff"></div></div>
<div class="a" style="left:339px;top:239px;width:5px;height:5px;background:#000"><div class="a" style="left:2px;top:2px;width:3px;height:3px;background:#fff"></div></div>
<div class="a" style="left:339px;top:606px;width:5px;height:5px;background:#000"><div class="a" style="left:2px;top:0px;width:3px;height:5px;background:#fff"></div></div>
<div class="a" style="left:339px;top:677px;width:5px;height:5px;background:#000"><div class="a" style="left:2px;top:0px;width:3px;height:5px;background:#fff"></div></div>
<div class="a" style="left:339px;top:736px;width:5px;height:5px;background:#000"><div class="a" style="left:2px;top:0px;width:3px;height:3px;background:#fff"></div></div>
<div class="a" style="left:353px;top:239px;width:5px;height:5px;background:#000"><div class="a" style="left:0px;top:2px;width:3px;height:3px;background:#fff"></div></div>
<div class="a" style="left:353px;top:606px;width:5px;height:5px;background:#000"><div class="a" style="left:0px;top:0px;width:3px;height:5px;background:#fff"></div></div>
<div class="a" style="left:353px;top:677px;width:5px;height:5px;background:#000"><div class="a" style="left:0px;top:0px;width:3px;height:5px;background:#fff"></div></div>
<div class="a" style="left:353px;top:736px;width:5px;height:5px;background:#000"><div class="a" style="left:0px;top:0px;width:3px;height:3px;background:#fff"></div></div>
<div class="a" style="left:363px;top:239px;width:5px;height:5px;background:#000"><div class="a" style="left:2px;top:2px;width:3px;height:3px;background:#fff"></div></div>
<div class="a" style="left:363px;top:606px;width:5px;height:5px;background:#000"><div class="a" style="left:2px;top:0px;width:3px;height:5px;background:#fff"></div></div>
<div class="a" style="left:363px;top:677px;width:5px;height:5px;background:#000"><div class="a" style="left:2px;top:0px;width:3px;height:5px;background:#fff"></div></div>
<div class="a" style="left:363px;top:736px;width:5px;height:5px;background:#000"><div class="a" style="left:2px;top:0px;width:3px;height:3px;background:#fff"></div></div>
<div class="a" style="left:377px;top:239px;width:5px;height:5px;background:#000"><div class="a" style="left:0px;top:2px;width:3px;height:3px;background:#fff"></div></div>
<div class="a" style="left:377px;top:606px;width:5px;height:5px;background:#000"><div class="a" style="left:0px;top:0px;width:3px;height:5px;background:#fff"></div></div>
<div class="a" style="left:377px;top:677px;width:5px;height:5px;background:#000"><div class="a" style="left:0px;top:0px;width:3px;height:5px;background:#fff"></div></div>
<div class="a" style="left:377px;top:736px;width:5px;height:5px;background:#000"><div class="a" style="left:0px;top:0px;width:3px;height:3px;background:#fff"></div></div>
<div class="a" style="left:387px;top:239px;width:5px;height:5px;background:#000"><div class="a" style="left:2px;top:2px;width:3px;height:3px;background:#fff"></div></div>
<div class="a" style="left:387px;top:606px;width:5px;height:5px;background:#000"><div class="a" style="left:2px;top:0px;width:3px;height:5px;background:#fff"></div></div>
<div class="a" style="left:387px;top:677px;width:5px;height:5px;background:#000"><div class="a" style="left:2px;top:0px;width:3px;height:5px;background:#fff"></div></div>
<div class="a" style="left:387px;top:736px;width:5px;height:5px;background:#000"><div class="a" style="left:2px;top:0px;width:3px;height:3px;background:#fff"></div></div>
<div class="a" style="left:401px;top:239px;width:5px;height:5px;background:#000"><div class="a" style="left:0px;top:2px;width:3px;height:3px;background:#fff"></div></div>
<div class="a" style="left:401px;top:606px;width:5px;height:5px;background:#000"><div class="a" style="left:0px;top:0px;width:3px;height:5px;background:#fff"></div></div>
<div class="a" style="left:401px;top:677px;width:5px;height:5px;background:#000"><div class="a" style="left:0px;top:0px;width:3px;height:5px;background:#fff"></div></div>
<div class="a" style="left:401px;top:736px;width:5px;height:5px;background:#000"><div class="a" style="left:0px;top:0px;width:3px;height:3px;background:#fff"></div></div>
<div class="a" style="left:411px;top:239px;width:5px;height:5px;background:#000"><div class="a" style="left:2px;top:2px;width:3px;height:3px;background:#fff"></div></div>
<div class="a" style="left:411px;top:606px;width:5px;height:5px;background:#000"><div class="a" style="left:2px;top:0px;width:3px;height:5px;background:#fff"></div></div>
<div class="a" style="left:411px;top:677px;width:5px;height:5px;background:#000"><div class="a" style="left:2px;top:0px;width:3px;height:5px;background:#fff"></div></div>
<div class="a" style="left:411px;top:736px;width:5px;height:5px;background:#000"><div class="a" style="left:2px;top:0px;width:3px;height:3px;background:#fff"></div></div>
<div class="a" style="left:425px;top:239px;width:5px;height:5px;background:#000"><div class="a" style="left:0px;top:2px;width:3px;height:3px;background:#fff"></div></div>
<div class="a" style="left:425px;top:606px;width:5px;height:5px;background:#000"><div class="a" style="left:0px;top:0px;width:3px;height:5px;background:#fff"></div></div>
<div class="a" style="left:425px;top:677px;width:5px;height:5px;background:#000"><div class="a" style="left:0px;top:0px;width:3px;height:5px;background:#fff"></div></div>
<div class="a" style="left:425px;top:736px;width:5px;height:5px;background:#000"><div class="a" style="left:0px;top:0px;width:3px;height:3px;background:#fff"></div></div>
<div class="a" style="left:435px;top:239px;width:5px;height:5px;background:#000"><div class="a" style="left:2px;top:2px;width:3px;height:3px;background:#fff"></div></div>
<div class="a" style="left:435px;top:606px;width:5px;height:5px;background:#000"><div class="a" style="left:2px;top:0px;width:3px;height:5px;background:#fff"></div></div>
<div class="a" style="left:435px;top:677px;width:5px;height:5px;background:#000"><div class="a" style="left:2px;top:0px;width:3px;height:5px;background:#fff"></div></div>
<div class="a" style="left:435px;top:736px;width:5px;height:5px;background:#000"><div class="a" style="left:2px;top:0px;width:3px;height:3px;background:#fff"></div></div>
<div class="a" style="left:449px;top:239px;width:5px;height:5px;background:#000"><div class="a" style="left:0px;top:2px;width:3px;height:3px;background:#fff"></div></div>
<div class="a" style="left:449px;top:606px;width:5px;height:5px;background:#000"><div class="a" style="left:0px;top:0px;width:3px;height:5px;background:#fff"></div></div>
<div class="a" style="left:449px;top:677px;width:5px;height:5px;background:#000"><div class="a" style="left:0px;top:0px;width:3px;height:5px;background:#fff"></div></div>
<div class="a" style="left:449px;top:736px;width:5px;height:5px;background:#000"><div class="a" style="left:0px;top:0px;width:3px;height:3px;background:#fff"></div></div>
<div class="a" style="left:459px;top:239px;width:5px;height:5px;background:#000"><div class="a" style="left:2px;top:2px;width:3px;height:3px;background:#fff"></div></div>
<div class="a" style="left:459px;top:606px;width:5px;height:5px;background:#000"><div class="a" style="left:2px;top:0px;width:3px;height:5px;background:#fff"></div></div>
<div class="a" style="left:459px;top:677px;width:5px;height:5px;background:#000"><div class="a" style="left:2px;top:0px;width:3px;height:5px;background:#fff"></div></div>
<div class="a" style="left:459px;top:736px;width:5px;height:5px;background:#000"><div class="a" style="left:2px;top:0px;width:3px;height:3px;background:#fff"></div></div>
<div class="a" style="left:473px;top:239px;width:5px;height:5px;background:#000"><div class="a" style="left:0px;top:2px;width:3px;height:3px;background:#fff"></div></div>
<div class="a" style="left:473px;top:606px;width:5px;height:5px;background:#000"><div class="a" style="left:0px;top:0px;width:3px;height:5px;background:#fff"></div></div>
<div class="a" style="left:473px;top:677px;width:5px;height:5px;background:#000"><div class="a" style="left:0px;top:0px;width:3px;height:5px;background:#fff"></div></div>
<div class="a" style="left:473px;top:736px;width:5px;height:5px;background:#000"><div class="a" style="left:0px;top:0px;width:3px;height:3px;background:#fff"></div></div>
<div class="a" style="left:483px;top:239px;width:5px;height:5px;background:#000"><div class="a" style="left:2px;top:2px;width:3px;height:3px;background:#fff"></div></div>
<div class="a" style="left:483px;top:606px;width:5px;height:5px;background:#000"><div class="a" style="left:2px;top:0px;width:3px;height:5px;background:#fff"></div></div>
<div class="a" style="left:483px;top:677px;width:5px;height:5px;background:#000"><div class="a" style="left:2px;top:0px;width:3px;height:5px;background:#fff"></div></div>
<div class="a" style="left:483px;top:736px;width:5px;height:5px;background:#000"><div class="a" style="left:2px;top:0px;width:3px;height:3px;background:#fff"></div></div>
<div class="a" style="left:497px;top:239px;width:5px;height:5px;background:#000"><div class="a" style="left:0px;top:2px;width:3px;height:3px;background:#fff"></div></div>
<div class="a" style="left:497px;top:606px;width:5px;height:5px;background:#000"><div class="a" style="left:0px;top:0px;width:3px;height:5px;background:#fff"></div></div>
<div class="a" style="left:497px;top:677px;width:5px;height:5px;background:#000"><div class="a" style="left:0px;top:0px;width:3px;height:5px;background:#fff"></div></div>
<div class="a" style="left:497px;top:736px;width:5px;height:5px;background:#000"><div class="a" style="left:0px;top:0px;width:3px;height:3px;background:#fff"></div></div>
<div class="a" style="left:507px;top:239px;width:5px;height:5px;background:#000"><div class="a" style="left:2px;top:2px;width:3px;height:3px;background:#fff"></div></div>
<div class="a" style="left:507px;top:606px;width:5px;height:5px;background:#000"><div class="a" style="left:2px;top:0px;width:3px;height:5px;background:#fff"></div></div>
<div class="a" style="left:507px;top:677px;width:5px;height:5px;background:#000"><div class="a" style="left:2px;top:0px;width:3px;height:5px;background:#fff"></div></div>
<div class="a" style="left:507px;top:736px;width:5px;height:5px;background:#000"><div class="a" style="left:2px;top:0px;width:3px;height:3px;background:#fff"></div></div>
<div class="a" style="left:521px;top:239px;width:5px;height:5px;background:#000"><div class="a" style="left:0px;top:2px;width:3px;height:3px;background:#fff"></div></div>
<div class="a" style="left:521px;top:606px;width:5px;height:5px;background:#000"><div class="a" style="left:0px;top:0px;width:3px;height:5px;background:#fff"></div></div>
<div class="a" style="left:521px;top:677px;width:5px;height:5px;background:#000"><div class="a" style="left:0px;top:0px;width:3px;height:5px;background:#fff"></div></div>
<div class="a" style="left:521px;top:736px;width:5px;height:5px;background:#000"><div class="a" style="left:0px;top:0px;width:3px;height:3px;background:#fff"></div></div>
<div class="a" style="left:531px;top:239px;width:5px;height:5px;background:#000"><div class="a" style="left:2px;top:2px;width:3px;height:3px;background:#fff"></div></div>
<div class="a" style="left:531px;top:606px;width:5px;height:5px;background:#000"><div class="a" style="left:2px;top:0px;width:3px;height:5px;background:#fff"></div></div>
<div class="a" style="left:531px;top:677px;width:5px;height:5px;background:#000"><div class="a" style="left:2px;top:0px;width:3px;height:5px;background:#fff"></div></div>
<div class="a" style="left:531px;top:736px;width:5px;height:5px;background:#000"><div class="a" style="left:2px;top:0px;width:3px;height:3px;background:#fff"></div></div>
<div class="a" style="left:545px;top:239px;width:5px;height:5px;background:#000"><div class="a" style="left:0px;top:2px;width:3px;height:3px;background:#fff"></div></div>
<div class="a" style="left:545px;top:606px;width:5px;height:5px;background:#000"><div class="a" style="left:0px;top:0px;width:3px;height:5px;background:#fff"></div></div>
<div class="a" style="left:545px;top:677px;width:5px;height:5px;background:#000"><div class="a" style="left:0px;top:0px;width:3px;height:5px;background:#fff"></div></div>
<div class="a" style="left:545px;top:736px;width:5px;height:5px;background:#000"><div class="a" style="left:0px;top:0px;width:3px;height:3px;background:#fff"></div></div>
<!-- SCROLL STRIP -->
<div class="a" style="left:806px;top:82px;width:18px;height:760px;background:linear-gradient(90deg,#2e2e2e,#474747)"></div>
<div class="a" style="left:823px;top:63px;width:2px;height:779px;background:#2a2a2a"></div>

<!-- RIGHT DOCK -->
<div class="a" style="left:825px;top:63px;width:372px;height:12px;background:#2d2d2d"></div>
<svg style="left:851px;top:67px" width="9" height="5"><path d="M4 0 L1 2.5 L4 5Z M8 0 L5 2.5 L8 5Z" fill="#cfcfcf"/></svg>
<div class="a" style="left:825px;top:75px;width:39px;height:767px;background:#535353;border-left:1px solid #5c5c5c;border-right:1px solid #5c5c5c"></div>
<div class="a" style="left:864px;top:63px;width:2px;height:779px;background:#2a2a2a"></div>
<div class="a" style="left:866px;top:75px;width:331px;height:767px;background:#535353"></div>
<svg style="left:0;top:0" width="1197" height="842"><defs><pattern id="grip" width="2" height="3" patternUnits="userSpaceOnUse"><rect width="1" height="3" fill="#262626"/></pattern></defs>
<rect x="833" y="79.0" width="22" height="3" fill="url(#grip)"/>
<rect x="838.5" y="91.5" width="5" height="4" fill="none" stroke="#c4c4c4"/>
<rect x="838.5" y="97.5" width="5" height="4" fill="none" stroke="#c4c4c4"/>
<rect x="838" y="103" width="6" height="5" fill="#c4c4c4"/>
<path d="M847 92 Q853 92 853 99 Q853 105 848 107" fill="none" stroke="#c4c4c4" stroke-width="2"/>
<path d="M845 91 L849 89 L849 94Z" fill="#c4c4c4"/>
<path d="M838 120 L856 127 L838 134 Z" fill="#bdbdbd"/>
<path d="M825 142.5 H864" stroke="#2a2a2a"/><path d="M825 143.5 H864" stroke="#5e5e5e"/>
<rect x="833" y="147.5" width="22" height="3" fill="url(#grip)"/>
<rect x="841" y="168" width="9" height="9" fill="#c4c4c4"/>
<path d="M843 168 L839 159 M845.5 168 L845.5 157 M848 168 L853 160" stroke="#c4c4c4" stroke-width="2"/>
<ellipse cx="839.5" cy="160" rx="2" ry="3" fill="#c4c4c4"/><ellipse cx="853" cy="160" rx="2.5" ry="3" fill="#c4c4c4"/>
<path d="M836 190 H854" stroke="#c4c4c4" stroke-width="1.5"/><ellipse cx="841" cy="190" rx="4.5" ry="2.5" fill="#c4c4c4"/>
<path d="M836 198 H848" stroke="#c4c4c4" stroke-width="1.5"/><path d="M848 198 L854 193 L856 198 L854 203Z" fill="#c4c4c4"/>
<path d="M825 212.5 H864" stroke="#2a2a2a"/><path d="M825 213.5 H864" stroke="#5e5e5e"/>
<rect x="833" y="216.5" width="22" height="3" fill="url(#grip)"/>
<path d="M836 229 H841 M836 232.5 H841 M836 236 H841" stroke="#c4c4c4" stroke-width="1.5"/>
<circle cx="848" cy="231" r="2.5" fill="#c4c4c4"/><rect x="846.5" y="232" width="3" height="6" fill="#c4c4c4"/>
<rect x="840" y="238" width="15" height="4" fill="#c4c4c4"/><path d="M840 244 H855" stroke="#c4c4c4"/>
<path d="M825 253.5 H864" stroke="#2a2a2a"/><path d="M825 254.5 H864" stroke="#5e5e5e"/>
<rect x="833" y="258.0" width="22" height="3" fill="url(#grip)"/>
<text x="837" y="283" font-family="Liberation Sans" font-size="16" fill="#c4c4c4">A</text>
<path d="M852.5 270 V284" stroke="#c4c4c4"/>
<path d="M846 299 H851 M846.5 299 V312 M849.5 299 V312" stroke="#c4c4c4" stroke-width="1.4"/>
<path d="M846 299 Q839 299 839 303 Q839 307 846 307Z" fill="#c4c4c4"/>
<path d="M825 323.0 H864" stroke="#2a2a2a"/><path d="M825 324.0 H864" stroke="#5e5e5e"/>
<rect x="833" y="327.0" width="22" height="3" fill="url(#grip)"/>
<path d="M838 354 L852 340" stroke="#c4c4c4" stroke-width="2.5"/>
<path d="M837 341 L849 351" stroke="#c4c4c4" stroke-width="2.2"/>
<circle cx="839" cy="341" r="2.5" fill="none" stroke="#c4c4c4" stroke-width="1.5"/>
<circle cx="851.5" cy="351.5" r="2.5" fill="none" stroke="#c4c4c4" stroke-width="1.5"/>
<path d="M825 363.5 H864" stroke="#2a2a2a"/><path d="M825 364.5 H864" stroke="#5e5e5e"/>
</svg>

<!-- PROPERTIES -->
<div class="a" style="left:866px;top:75px;width:331px;height:17px;background:#3b3b3b"></div>
<div class="a" style="left:866px;top:75px;width:37px;height:18px;background:#535353"></div>
<div class="a" style="left:903px;top:91px;width:294px;height:1px;background:#2e2e2e"></div>
<div class="t" style="left:874px;top:79px;font-size:11px;color:#ececec">属性</div>
<div class="a" style="left:877px;top:98px;width:22px;height:22px;background:#353535;border-radius:3px"></div>
<div class="a" style="left:879px;top:100px;width:18px;height:13px;background:linear-gradient(#d8d8d8,#a8a8a8)"></div>
<div class="a" style="left:885px;top:104px;width:6px;height:6px;background:#333;border-radius:50%"></div>
<div class="t" style="left:905px;top:102px;color:#ececec">蒙版</div>
<div class="a" style="left:866px;top:124px;width:331px;height:1px;background:#3a3a3a"></div>
<div class="a" style="left:866px;top:125px;width:331px;height:1px;background:#5e5e5e"></div>
<div class="a" style="left:878px;top:134px;width:21px;height:32px;background:#8a8a8a;border:1px solid #262626"></div>
<div class="a" style="left:884px;top:138px;width:2px;height:21px;background:#f4f4f4"></div>
<div class="a" style="left:891px;top:138px;width:2px;height:21px;background:#f4f4f4"></div>
<div class="t" style="left:910px;top:143px;color:#ececec">形状路径</div>
<div class="a" style="left:866px;top:179px;width:331px;height:1px;background:#3a3a3a"></div>
<div class="a" style="left:866px;top:180px;width:331px;height:1px;background:#5e5e5e"></div>
<div class="t" style="left:879px;top:201px;color:#ececec">浓度：</div>
<div class="a" style="left:879px;top:218px;width:318px;height:1px;background:#5e5e5e"></div>
<div class="a" style="left:879px;top:221px;width:318px;height:6px;background:#2c2c2c;border-bottom:1px solid #444"></div>
<div class="a" style="left:879px;top:227px;width:318px;height:1px;background:#6a6a6a"></div>
<div class="t" style="left:879px;top:257px;color:#ececec">羽化：</div>
<div class="a" style="left:879px;top:274px;width:318px;height:1px;background:#5e5e5e"></div>
<div class="a" style="left:879px;top:277px;width:318px;height:5px;background:#2c2c2c;border-bottom:1px solid #444"></div>
<div class="a" style="left:879px;top:282px;width:318px;height:1px;background:#6a6a6a"></div>
<svg style="left:874px;top:274px" width="11" height="9"><path d="M0.5 8.5 L0.5 5 L5.5 0.5 L10.5 5 L10.5 8.5 Z" fill="#a8a8a8" stroke="#444"/></svg>
<div class="t" style="left:875px;top:309px;color:#a9a9a9">调整：</div>
<div class="a" style="left:866px;top:521px;width:331px;height:1px;background:#484848"></div>
<div class="a" style="left:866px;top:522px;width:331px;height:1px;background:#5c5c5c"></div>
<div class="a" style="left:866px;top:540px;width:331px;height:2px;background:#2a2a2a"></div>

<!-- LAYERS -->
<div class="a" style="left:866px;top:542px;width:331px;height:18px;background:#3b3b3b"></div>
<div class="a" style="left:866px;top:542px;width:37px;height:19px;background:#535353"></div>
<div class="a" style="left:903px;top:559px;width:294px;height:1px;background:#2e2e2e"></div>
<div class="a" style="left:903px;top:542px;width:1px;height:18px;background:#2e2e2e"></div>
<div class="a" style="left:940px;top:542px;width:1px;height:18px;background:#2e2e2e"></div>
<div class="a" style="left:977px;top:542px;width:1px;height:18px;background:#2e2e2e"></div>
<div class="a" style="left:1007px;top:542px;width:1px;height:18px;background:#2e2e2e"></div>
<div class="t" style="left:874px;top:547px;font-size:11px;color:#e6e6e6">图层</div>
<div class="t" style="left:911px;top:547px;font-size:11px;color:#8e8e8e">通道</div>
<div class="t" style="left:949px;top:547px;font-size:11px;color:#8e8e8e">路径</div>
<div class="t" style="left:985px;top:547px;font-size:11px;color:#8e8e8e">3D</div>

<div class="a" style="left:871px;top:563px;width:70px;height:21px;background:linear-gradient(#6c6c6c,#5a5a5a);border:1px solid #3a3a3a;border-radius:2px"></div>
<svg style="left:876px;top:567px" width="12" height="12"><circle cx="7" cy="5" r="3.3" fill="none" stroke="#d0d0d0" stroke-width="1.4"/><path d="M4.5 7.5 L1 11" stroke="#d0d0d0" stroke-width="1.6"/></svg>
<div class="t" style="left:892px;top:568px;color:#ececec">类型</div>
<svg style="left:930px;top:567px" width="7" height="12"><path d="M0.5 5 L3.5 1 L6.5 5Z M0.5 7 L3.5 11 L6.5 7Z" fill="#dadada"/></svg>
<svg style="left:960px;top:566px" width="145" height="18">
<rect x="2.5" y="2.5" width="13" height="10" fill="none" stroke="#cfcfcf"/>
<path d="M4 11 L7 7 L10 9 L12 8 L14 11Z" fill="#cfcfcf"/><circle cx="12" cy="5.5" r="1.2" fill="#cfcfcf"/>
<circle cx="32" cy="7.5" r="5.5" fill="#bcbcbc"/><path d="M28 11.5 L36 3.5" stroke="#4a4a4a" stroke-width="2"/>
<path d="M50.5 2.5 H61.5 V5.5 M50.5 2.5 V5.5 M56 2.5 V12.5 M53.5 12.5 H58.5" fill="none" stroke="#cfcfcf" stroke-width="1.7"/>
<rect x="75.5" y="3.5" width="10" height="9" fill="none" stroke="#cfcfcf"/>
<rect x="74" y="2" width="3" height="3" fill="#cfcfcf"/><rect x="84" y="2" width="3" height="3" fill="#cfcfcf"/><rect x="74" y="11" width="3" height="3" fill="#cfcfcf"/><rect x="84" y="11" width="3" height="3" fill="#cfcfcf"/>
<path d="M103.5 2.5 H108 L110.5 5 V13.5 H103.5Z" fill="none" stroke="#cfcfcf"/>
<rect x="99" y="8" width="6" height="6" fill="#a8a8a8"/>
<rect x="134" y="-2" width="8" height="18" fill="#2f2f2f" stroke="#3c3c3c"/>
<rect x="135" y="-1" width="6" height="8" fill="#8a8a8a"/>
</svg>
<div class="a" style="left:866px;top:587px;width:331px;height:1px;background:#3e3e3e"></div>
<div class="a" style="left:866px;top:588px;width:331px;height:1px;background:#5c5c5c"></div>

<div class="a" style="left:871px;top:592px;width:110px;height:20px;background:linear-gradient(#6c6c6c,#5a5a5a);border:1px solid #3a3a3a;border-radius:2px"></div>
<div class="t" style="left:879px;top:596px;color:#ececec">正常</div>
<svg style="left:970px;top:596px" width="7" height="12"><path d="M0.5 5 L3.5 1 L6.5 5Z M0.5 7 L3.5 11 L6.5 7Z" fill="#dadada"/></svg>
<div class="t" style="left:988px;top:596px;color:#ececec">不透明度：</div>
<div class="a" style="left:1046px;top:592px;width:36px;height:20px;background:#383838"></div>
<div class="t" style="left:1049px;top:597px;font-size:11px;color:#ececec">100%</div>
<div class="a" style="left:1082px;top:592px;width:19px;height:20px;background:#686868;border:1px solid #474747"></div>
<svg style="left:1088px;top:601px" width="7" height="4"><path d="M0 0 L7 0 L3.5 4Z" fill="#e6e6e6"/></svg>
<div class="a" style="left:866px;top:615px;width:331px;height:1px;background:#3e3e3e"></div>
<div class="a" style="left:866px;top:616px;width:331px;height:1px;background:#5c5c5c"></div>

<div class="t" style="left:873px;top:623px;color:#ececec">锁定：</div>
<svg style="left:905px;top:620px" width="90" height="20">
<rect x="5" y="4.5" width="10" height="11" fill="#7a7a7a"/>
<path d="M5 4.5 h3 v3 h-3z M11 4.5 h3 v3 h-3z M8 7.5 h3 v3 h-3z M5 10.5 h3 v3 h-3z M11 10.5 h3 v3 h-3z" fill="#5a5a5a"/>
<path d="M26 16 Q30 16 32 12 L40 3" fill="none" stroke="#7c7c7c" stroke-width="2"/>
<path d="M54 4 V16 M48 10 H60 M52 6 L54 4 L56 6 M52 14 L54 16 L56 14 M50 8 L48 10 L50 12 M58 8 L60 10 L58 12" fill="none" stroke="#d0d0d0" stroke-width="1.3"/>
<rect x="71.5" y="9" width="10" height="8" fill="#b0b0b0"/>
<path d="M73.5 9 V6.5 Q76.5 3 79.5 6.5 V9" fill="none" stroke="#b0b0b0" stroke-width="1.6"/>
</svg>
<div class="t" style="left:1013px;top:623px;color:#ececec">填充：</div>
<div class="a" style="left:1046px;top:621px;width:36px;height:19px;background:#383838"></div>
<div class="t" style="left:1049px;top:626px;font-size:11px;color:#ececec">100%</div>
<div class="a" style="left:1082px;top:621px;width:19px;height:19px;background:#686868;border:1px solid #474747"></div>
<svg style="left:1088px;top:629px" width="7" height="4"><path d="M0 0 L7 0 L3.5 4Z" fill="#e6e6e6"/></svg>
<div class="a" style="left:866px;top:641px;width:331px;height:1px;background:#3a3a3a"></div>
<div class="a" style="left:866px;top:642px;width:331px;height:2px;background:#4c4c4c"></div>

<!-- layer rows -->
<div class="a" style="left:897px;top:645px;width:300px;height:39px;background:#5a6678"></div>
<div class="a" style="left:866px;top:684px;width:331px;height:1px;background:#3a3a3a"></div>
<div class="a" style="left:866px;top:723px;width:331px;height:1px;background:#3a3a3a"></div>
<div class="a" style="left:866px;top:762px;width:331px;height:1px;background:#383838"></div>
<div class="a" style="left:866px;top:763px;width:331px;height:79px;background:#4a4a4a"></div>
<div class="a" style="left:896px;top:644px;width:1px;height:118px;background:#454545"></div>
<svg style="left:872px;top:658px" width="18" height="100">
<g id="eye"><ellipse cx="9" cy="7" rx="6.5" ry="4" fill="#bdbdbd"/><circle cx="9" cy="7" r="2.6" fill="#3a3a3a"/><circle cx="9.5" cy="6.5" r="0.8" fill="#ddd"/></g>
<use href="#eye" y="39"/><use href="#eye" y="78"/>
</svg>
<svg style="left:897px;top:646px" width="24" height="38">
<rect x="3" y="3" width="16" height="32" fill="#0c0c0c"/>
<path d="M5 4 V33 M8.5 4 V22 M11.5 4 V22 M14.5 4 V22 M17.5 4 V22" stroke="#d0d0d0" stroke-width="1.5"/>
<path d="M1.5 8 V1.5 H7 M15 1.5 H20.5 V8 M1.5 29 V36.5 H7 M15 36.5 H20.5 V29" fill="none" stroke="#f0f0f0" stroke-width="1.3"/>
<rect x="8.5" y="24.5" width="9" height="8" fill="#4d5a70" stroke="#c8d0dc" stroke-width="0.8"/>
</svg>
<div class="t" style="left:926px;top:660px;color:#f0f0f0">矩形 1</div>
<div class="a" style="left:900px;top:688px;width:31px;height:31px;background:#e2e3d9;border:1px solid #1c1c1c"></div>
<div class="a" style="left:901px;top:710px;width:29px;height:8px;background:#f6f6f6"></div>
<div class="a" style="left:903px;top:712px;width:25px;height:1px;background:#222"></div>
<svg style="left:912px;top:713px" width="7" height="4"><path d="M0 4 L3.5 0 L7 4Z" fill="#222"/></svg>
<svg style="left:935px;top:697px" width="9" height="15"><rect x="1.5" y="1" width="6" height="6" rx="3" fill="none" stroke="#bbb" stroke-width="1.4"/><rect x="1.5" y="8" width="6" height="6" rx="3" fill="none" stroke="#bbb" stroke-width="1.4"/></svg>
<div class="a" style="left:947px;top:688px;width:21px;height:31px;background:#fdfdfd;border:1px solid #1c1c1c"></div>
<div class="t" style="left:978px;top:699px;color:#f0f0f0">颜色填充 1</div>
<div class="a" style="left:900px;top:727px;width:21px;height:32px;background:#fdfdfd;border:1px solid #1c1c1c"></div>
<div class="t" style="left:933px;top:738px;color:#f0f0f0;font-style:italic">背景</div>

<!-- watermark -->
<div class="a" style="left:1018px;top:770px;width:179px;height:72px;background:linear-gradient(90deg,#525253 0%,#59595b 15%,#626169 35%,#6b6975 55%,#66646f 72%,#5d5b65 88%,#5a5962 100%);filter:blur(2px)"></div>
</body></html>
